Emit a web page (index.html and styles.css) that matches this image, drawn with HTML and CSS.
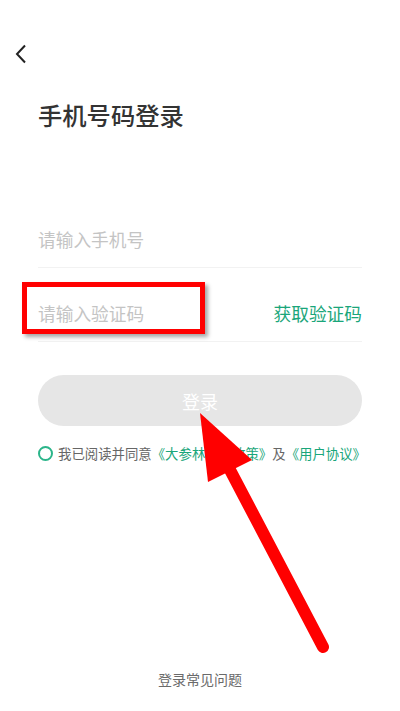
FILE: index.html
```html
<!DOCTYPE html>
<html lang="zh">
<head>
<meta charset="utf-8">
<link rel="stylesheet" href="styles.css">
</head>
<body>
<div class="page">
  <div class="topbar">
    <svg class="back" width="12" height="20" viewBox="0 0 12 20"><polyline points="10,1.5 2,10 10,18.5" fill="none" stroke="#222" stroke-width="2"/></svg>
  </div>
  <h1 class="title">手机号码登录</h1>
  <div class="form">
    <div class="row">
      <input class="field" type="text" placeholder="请输入手机号">
    </div>
    <div class="row">
      <input class="field" type="text" placeholder="请输入验证码">
      <span class="getcode">获取验证码</span>
    </div>
    <button class="login">登录</button>
    <div class="agree">
      <span class="radio"></span>
      <span class="agree-text">我已阅读并同意<span class="link">《大参林隐私政策》</span>及<span class="link">《用户协议》</span></span>
    </div>
  </div>
  <div class="footer">登录常见问题</div>

  <div class="highlight"></div>
  <svg class="arrow" width="400" height="711" viewBox="0 0 400 711">
    <line x1="229" y1="468" x2="323" y2="647" stroke="#ff0000" stroke-width="12" stroke-linecap="round"/>
    <polygon points="200,413 208,482 252,460" fill="#ff0000"/>
  </svg>
</div>
</body>
</html>
```
FILE: styles.css
```css
* { box-sizing: border-box; }
html, body { margin: 0; padding: 0; background: #fff; }
body {
  font-family: "Noto Sans CJK SC", "Noto Sans", sans-serif;
  color: #333;
}
.page {
  position: relative;
  width: 400px;
  height: 711px;
  display: flex;
  flex-direction: column;
  overflow: hidden;
}
.topbar {
  height: 88px;
  padding: 44px 0 0 15px;
}
.back { display: block; }
.title {
  margin: 11px 0 0 38px;
  font-size: 24.3px;
  line-height: 32px;
  font-weight: 500;
  color: #333;
}
.form {
  margin: 63px 38px 0 38px;
}
.row {
  height: 74px;
  padding: 35px 0 19px 0;
  border-bottom: 1px solid #f2f2f2;
  display: flex;
  align-items: center;
  justify-content: space-between;
}
.field {
  border: none;
  outline: none;
  padding: 0;
  font-family: inherit;
  font-size: 17.7px;
  line-height: 20px;
  height: 20px;
  width: 200px;
  color: #333;
  background: transparent;
}
.field::placeholder { color: #c4c4c4; }
.getcode {
  font-size: 17.7px;
  line-height: 20px;
  color: #1aa67a;
}
.login {
  display: block;
  width: 100%;
  height: 51px;
  margin-top: 33px;
  border: none;
  border-radius: 26px;
  background: #e6e6e6;
  color: #fff;
  font-family: inherit;
  font-size: 18px;
}
.agree {
  margin-top: 18px;
  display: flex;
  align-items: center;
  gap: 5px;
  white-space: nowrap;
}
.radio {
  width: 15px;
  height: 15px;
  border: 2px solid #2bb58a;
  border-radius: 50%;
  flex: none;
}
.agree-text {
  font-size: 13.4px;
  line-height: 18px;
  color: #666;
}
.link { color: #1aa67a; }
.footer {
  margin-top: auto;
  margin-bottom: 23px;
  text-align: center;
  font-size: 14px;
  line-height: 18px;
  color: #6a6a6a;
}
.highlight {
  position: absolute;
  left: 22px;
  top: 282px;
  width: 183px;
  height: 52px;
  border: 5px solid #ff0000;
  box-shadow: 3px 3px 4px rgba(0,0,0,0.35);
}
.arrow {
  position: absolute;
  left: 0;
  top: 0;
  pointer-events: none;
}
```
